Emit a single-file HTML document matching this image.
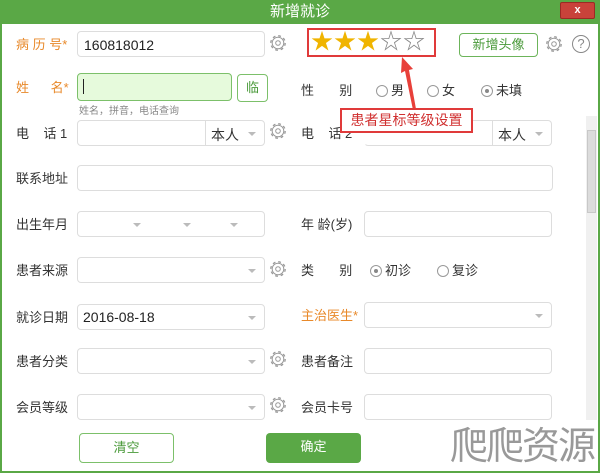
<!DOCTYPE html>
<html><head><meta charset="utf-8"><style>
*{margin:0;padding:0;box-sizing:border-box}
body{width:600px;height:473px;overflow:hidden;background:#fff;font-family:"Liberation Sans","Noto Sans CJK SC",sans-serif;font-size:13px;color:#333;position:relative}
.win{position:absolute;left:0;top:0;width:600px;height:473px;border:2px solid #5aa846;border-top:none;background:#fff}
.title{position:absolute;left:0;top:0;width:600px;height:24px;background:#5aa846;color:#fff;text-align:center;font-size:15px;line-height:24px}
.close{position:absolute;left:560px;top:2px;width:35px;height:17px;background:#c9423a;border:1px solid #9b2a24;border-radius:2px;color:#fff;font-size:11px;font-weight:bold;text-align:center;line-height:15px}
.a{position:absolute}
.lbl{position:absolute;font-size:13px;color:#333;line-height:16px}
.or{color:#e8892a}
.in{position:absolute;height:26px;border:1px solid #ddd;border-radius:4px;background:#fff}
.dd::after{content:"";position:absolute;right:8px;top:11px;border:4px solid transparent;border-top:4px solid #bbb}
.tri{position:absolute;top:11px;border:4px solid transparent;border-top:4px solid #bbb}
.gear{position:absolute;width:18px;height:18px}
.rad{position:absolute;width:12px;height:12px;border:1px solid #999;border-radius:50%;background:#fff}
.rad.on::after{content:"";position:absolute;left:3px;top:3px;width:4px;height:4px;border-radius:50%;background:#888}
.btn{position:absolute;height:30px;border-radius:4px;text-align:center;line-height:28px;font-size:13px}
</style></head><body>
<div class="win"></div>
<div class="title">新增就诊</div>
<div class="close">x</div>

<svg width="0" height="0" style="position:absolute"><defs><g id="g"><circle cx="9" cy="9" r="7.2" fill="none" stroke="#999" stroke-width="1.3" stroke-dasharray="2.8 2.85"/><circle cx="9" cy="9" r="5.8" fill="none" stroke="#999" stroke-width="1"/><circle cx="9" cy="9" r="2.3" fill="none" stroke="#999" stroke-width="1"/></g></defs></svg>

<div class="lbl or" style="left:16px;top:37px">病 历 号*</div>
<div class="in" style="left:77px;top:31px;width:188px"><span class="a" style="left:6px;top:5px;font-size:14px;color:#222">160818012</span></div>
<svg class="gear" style="left:269px;top:34px"><use href="#g"/></svg>
<div class="a" style="left:307px;top:28px;width:129px;height:29px;border:2px solid #e03a3a"></div>
<div class="a" style="left:311px;top:31px;font-size:22px;line-height:22px;letter-spacing:1px"><span style="color:#f0b400">★★★</span><span style="color:#888">☆☆</span></div>
<div class="btn" style="left:459px;top:33px;width:79px;height:24px;line-height:22px;border:1px solid #6cb45a;color:#4a9a3a">新增头像</div>
<svg class="gear" style="left:545px;top:35px"><use href="#g"/></svg>
<div class="a" style="left:572px;top:35px;width:18px;height:18px;border:1.5px solid #888;border-radius:50%;color:#888;font-size:13px;text-align:center;line-height:15px">?</div>

<div class="lbl or" style="left:16px;top:80px">姓&nbsp;&nbsp;&nbsp;&nbsp;&nbsp;&nbsp;名*</div>
<div class="in" style="left:77px;top:73px;width:155px;height:28px;background:#e6fadc;border-color:#7cc06a"><span class="a" style="left:5px;top:5px;width:1px;height:15px;background:#222"></span></div>
<div class="btn" style="left:237px;top:74px;width:31px;height:28px;border:1px solid #7cc06a;color:#4a9a3a;line-height:26px">临</div>
<div class="lbl" style="left:79px;top:104px;font-size:10px;color:#888">姓名，拼音，电话查询</div>
<div class="lbl" style="left:301px;top:83px">性&nbsp;&nbsp;&nbsp;&nbsp;&nbsp;&nbsp;&nbsp;别</div>
<div class="rad" style="left:376px;top:85px"></div><div class="lbl" style="left:391px;top:83px">男</div>
<div class="rad" style="left:427px;top:85px"></div><div class="lbl" style="left:442px;top:83px">女</div>
<div class="rad on" style="left:481px;top:85px"></div><div class="lbl" style="left:496px;top:83px">未填</div>
<svg class="a" style="left:395px;top:55px" width="30" height="60"><polygon points="7,2 18,14 14,15 21,54 18,55 10,16 6,18" fill="#e8403a"/></svg>

<div class="lbl" style="left:16px;top:126px">电&nbsp;&nbsp;&nbsp;&nbsp;话 1</div>
<div class="in dd" style="left:77px;top:120px;width:188px"><span class="a" style="left:127px;top:-1px;width:1px;height:26px;background:#ddd"></span><span class="a" style="left:133px;top:4px;font-size:14px">本人</span></div>
<svg class="gear" style="left:269px;top:122px"><use href="#g"/></svg>
<div class="lbl" style="left:301px;top:126px">电&nbsp;&nbsp;&nbsp;&nbsp;话 2</div>
<div class="in dd" style="left:364px;top:120px;width:188px;border-left-color:#fff"><span class="a" style="left:127px;top:-1px;width:1px;height:26px;background:#ddd"></span><span class="a" style="left:133px;top:4px;font-size:14px">本人</span></div>
<div class="a" style="left:340px;top:108px;width:133px;height:25px;border:2px solid #e03a3a;background:#fff;color:#d03030;font-size:14px;line-height:21px;text-align:center">患者星标等级设置</div>

<div class="a" style="left:586px;top:116px;width:11px;height:304px;background:#f0f0f0"></div>
<div class="a" style="left:587px;top:130px;width:9px;height:83px;background:#dcdcdc;border:1px solid #c8c8c8"></div>

<div class="lbl" style="left:16px;top:171px">联系地址</div>
<div class="in" style="left:77px;top:165px;width:476px"></div>
<div class="lbl" style="left:16px;top:217px">出生年月</div>
<div class="in" style="left:77px;top:211px;width:188px"><span class="tri" style="left:55px"></span><span class="tri" style="left:105px"></span><span class="tri" style="left:152px"></span></div>
<div class="lbl" style="left:301px;top:217px">年 龄(岁)</div>
<div class="in" style="left:364px;top:211px;width:188px"></div>
<div class="lbl" style="left:16px;top:263px">患者来源</div>
<div class="in dd" style="left:77px;top:257px;width:188px"></div>
<svg class="gear" style="left:269px;top:260px"><use href="#g"/></svg>
<div class="lbl" style="left:301px;top:263px">类&nbsp;&nbsp;&nbsp;&nbsp;&nbsp;&nbsp;&nbsp;别</div>
<div class="rad on" style="left:370px;top:265px"></div><div class="lbl" style="left:385px;top:263px">初诊</div>
<div class="rad" style="left:437px;top:265px"></div><div class="lbl" style="left:452px;top:263px">复诊</div>
<div class="lbl" style="left:16px;top:310px">就诊日期</div>
<div class="in dd" style="left:77px;top:304px;width:188px"><span class="a" style="left:5px;top:4px;font-size:14px;color:#222">2016-08-18</span></div>
<div class="lbl or" style="left:301px;top:308px">主治医生*</div>
<div class="in dd" style="left:364px;top:302px;width:188px"></div>
<div class="lbl" style="left:16px;top:354px">患者分类</div>
<div class="in dd" style="left:77px;top:348px;width:188px"></div>
<svg class="gear" style="left:269px;top:350px"><use href="#g"/></svg>
<div class="lbl" style="left:301px;top:354px">患者备注</div>
<div class="in" style="left:364px;top:348px;width:188px"></div>
<div class="lbl" style="left:16px;top:400px">会员等级</div>
<div class="in dd" style="left:77px;top:394px;width:188px"></div>
<svg class="gear" style="left:269px;top:396px"><use href="#g"/></svg>
<div class="lbl" style="left:301px;top:400px">会员卡号</div>
<div class="in" style="left:364px;top:394px;width:188px"></div>

<div class="btn" style="left:79px;top:433px;width:95px;border:1px solid #7cc06a;color:#4a9a3a">清空</div>
<div class="btn" style="left:266px;top:433px;width:95px;background:#5aa846;color:#fff">确定</div>
<div class="a" style="left:450px;top:425px;font-size:38px;line-height:44px;color:#999;letter-spacing:-2px">爬爬资源</div>
</body></html>
